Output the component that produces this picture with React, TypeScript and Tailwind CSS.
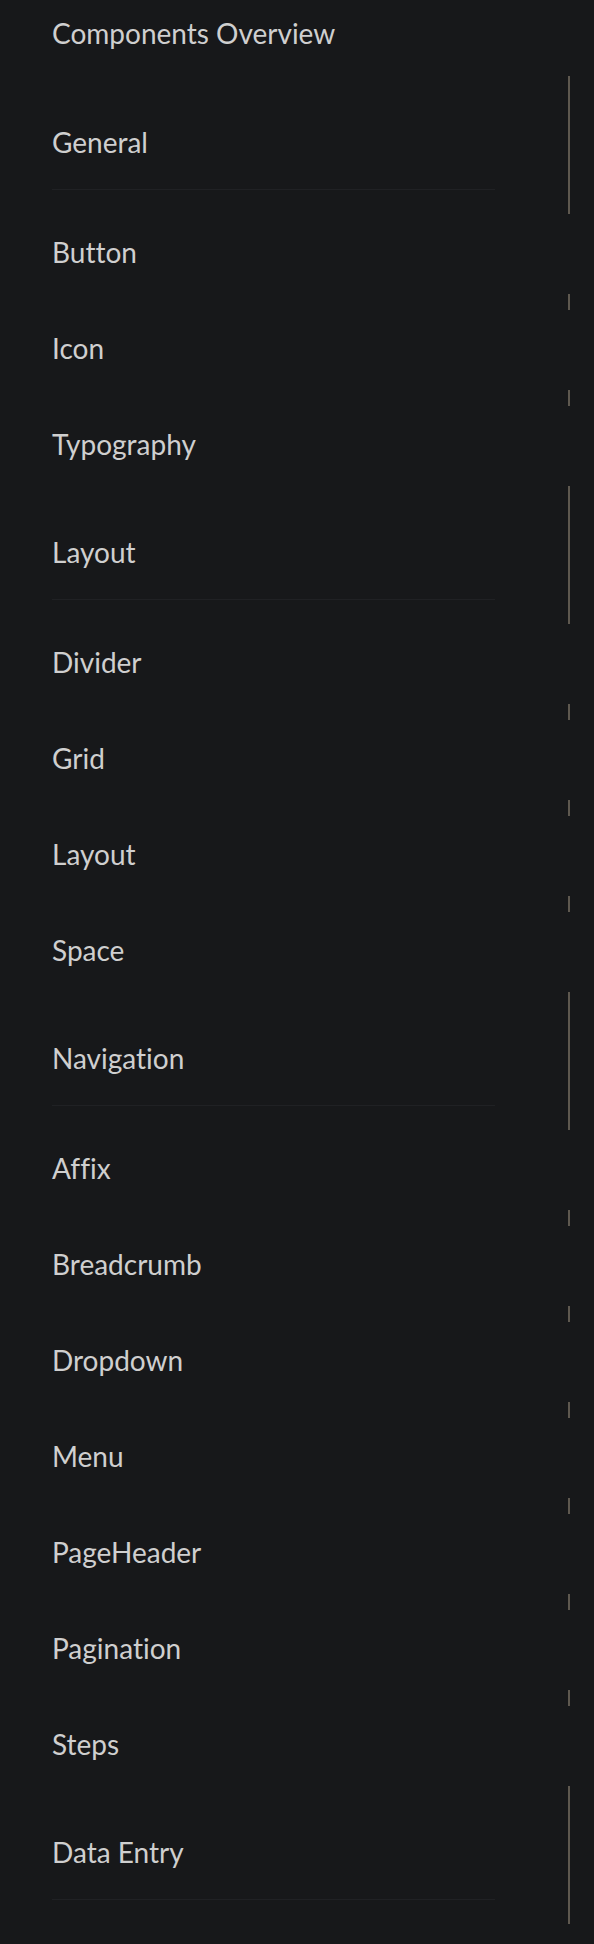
const groups: { title: string; items: string[] }[] = [
  { title: "General", items: ["Button", "Icon", "Typography"] },
  { title: "Layout", items: ["Divider", "Grid", "Layout", "Space"] },
  {
    title: "Navigation",
    items: ["Affix", "Breadcrumb", "Dropdown", "Menu", "PageHeader", "Pagination", "Steps"],
  },
  { title: "Data Entry", items: [] },
];

function Bar({ tall }: { tall?: boolean }) {
  return <div className={`w-[2px] bg-[#5e584f] ${tall ? "h-[138px]" : "h-[16px]"}`} />;
}

export default function App() {
  return (
    <div
      className="min-h-screen w-[594px] bg-[#17181a] text-[#cfcfcf] text-[28px] [font-variant-ligatures:none]"
      style={{ fontFamily: "Lato, 'Open Sans', sans-serif" }}
    >
      <div className="flex h-[76px] items-start pl-[52px] pt-[17px]">
        <span className="leading-[32px]">Components Overview</span>
      </div>

      {groups.map((g) => (
        <div key={g.title}>
          {/* group header */}
          <div className="flex h-[138px]">
            <div className="w-[495px] pl-[52px]">
              <div className="pt-[50px] leading-[32px]">{g.title}</div>
              <div className="mt-[31px] h-px bg-[#202124]" />
            </div>
            <div className="ml-[73px] flex items-center">
              <Bar tall />
            </div>
          </div>

          {g.items.map((it, i) => (
            <div key={it}>
              <div className="flex h-[80px] items-center pb-[5px] pl-[52px]">
                <span className="leading-[32px]">{it}</span>
              </div>
              {i < g.items.length - 1 && (
                <div className="flex h-[16px] pl-[568px]">
                  <Bar />
                </div>
              )}
            </div>
          ))}
        </div>
      ))}
    </div>
  );
}
